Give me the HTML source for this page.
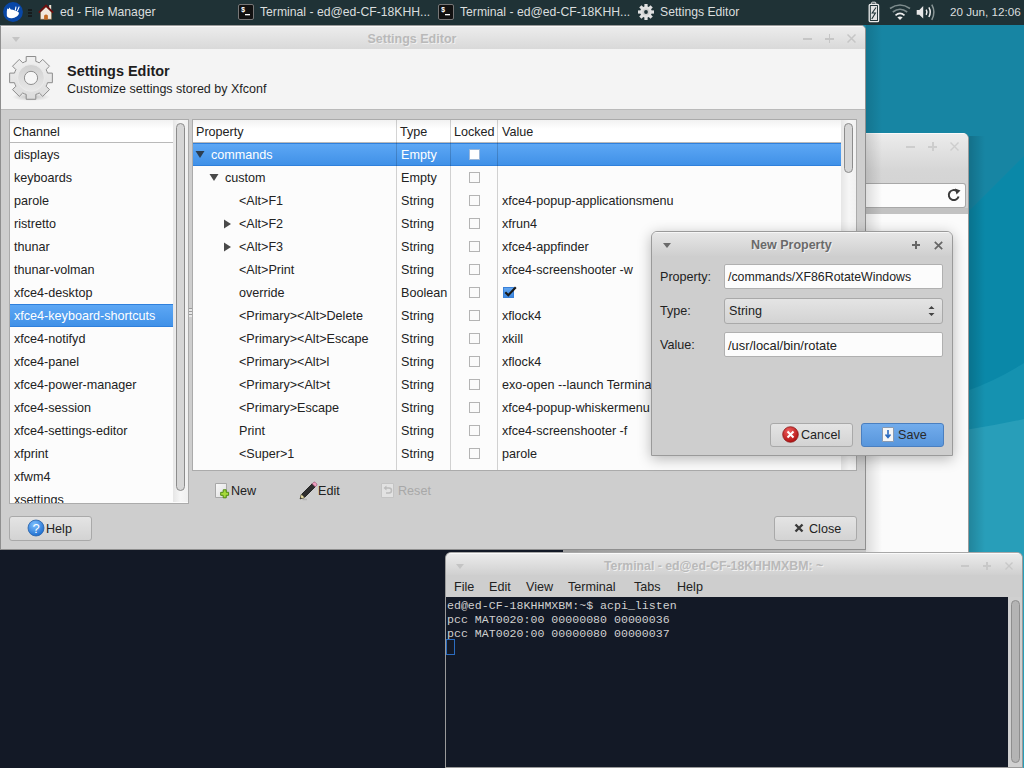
<!DOCTYPE html>
<html><head><meta charset="utf-8">
<style>
*{box-sizing:border-box;margin:0;padding:0}
html,body{width:1024px;height:768px;overflow:hidden;background:#1a86a3;font-family:"Liberation Sans",sans-serif;font-size:12.6px;color:#222}
.a{position:absolute}
.nw{white-space:nowrap}
#desk{left:0;top:0;width:1024px;height:768px;background:linear-gradient(135deg,#1986a8 0%,#1b8eac 45%,#0f80a2 55%,#0a7090 100%)}
#panel{left:0;top:0;width:1024px;height:25px;background:#1f3236;color:#dfe3e3}
.pt{top:5px;font-size:12.2px;white-space:nowrap;color:#dadede}
.ttl{font-weight:bold;color:#b9b9b9;text-shadow:1px 1px 0 #f0f0f0;font-size:13px;white-space:nowrap}
.r{position:absolute;left:0;height:23px;line-height:23px;white-space:nowrap;padding-top:1px}
.sel{background:linear-gradient(#5ea8f5,#3f90e7);box-shadow:inset 0 1px 0 #2f80dc,inset 0 -1px 0 #2f80dc;color:#fff}
.cb{position:absolute;width:11px;height:11px;border:1px solid #b4b4b4;background:#fbfbfb}
.btn{position:absolute;border:1px solid #a9a9a9;border-radius:3px;background:linear-gradient(#e4e4e4,#d3d3d3);}
.entry{position:absolute;border:1px solid #b0b0b0;border-radius:2px;background:#fcfcfc}
.mono{font-family:"Liberation Mono",monospace}
.hdr{position:absolute;top:0;height:23px;line-height:23px;background:linear-gradient(#f2f2f2,#ffffff 40%);border-bottom:1px solid #b9b9b9;white-space:nowrap}
.col{position:absolute;top:0;width:1px;background:rgba(0,0,0,0.17)}
</style></head><body>
<svg id="desk" class="a" width="1024" height="768" viewBox="0 0 1024 768">
<rect width="1024" height="768" fill="#0a88a8"/>
<path d="M0 0 H1024 V156 L700 480 L0 480 Z" fill="#1785a3"/>
<path d="M900 410 L968 390.5 Q997 380 1024 363 V768 H900 Z" fill="#1592b0"/>
<path d="M900 440 L968 429.5 Q997 425 1024 419 V768 H900 Z" fill="#289eb9"/>
</svg>

<div class="a" style="left:0;top:549px;width:563px;height:219px;background:#131926"></div>
<div class="a" style="left:563px;top:549px;width:15px;height:5px;background:#9a9a9a"></div>
<div class="a" style="left:578px;top:549px;width:288px;height:5px;background:linear-gradient(90deg,#9c9c9c,#c6c6c6)"></div>
<div class="a" style="left:866px;top:133px;width:103px;height:420px;background:#fbfbfb;border-right:1px solid #9a9a9a;border-top-right-radius:6px;overflow:hidden">
  <div class="a" style="left:0;top:0;width:102px;height:81px;background:linear-gradient(#ececec,#d6d6d6 45%,#d0d0d0);border-top:1px solid #fafafa"></div>
  <div class="a" style="left:0;top:50px;width:100px;height:25px;background:#fcfcfc;border:1px solid #a8a8a8;border-left:none;border-radius:0 3px 3px 0"></div>
  <div class="a" style="left:0;top:75px;width:102px;height:6px;background:#c2c2c2"></div>
  <svg class="a" style="left:80px;top:54px" width="16" height="16" viewBox="0 0 16 16"><path d="M12.6 9.5 A5 5 0 1 1 11 4.2" fill="none" stroke="#3a3a3a" stroke-width="2"/><path d="M9 1.5 L14.5 3.5 L10.5 7.5 Z" fill="#3a3a3a"/></svg>
  <div class="a" style="left:40px;top:13px;width:9px;height:1.5px;background:#cdcdcd"></div>
  <div class="a" style="left:62px;top:13px;width:9px;height:1.5px;background:#cdcdcd"></div><div class="a" style="left:66px;top:9px;width:1.5px;height:9px;background:#cdcdcd"></div>
  <svg class="a" style="left:84px;top:9px" width="9" height="9"><path d="M0.5 0.5 L8.5 8.5 M8.5 0.5 L0.5 8.5" stroke="#cdcdcd" stroke-width="1.4"/></svg>
</div>
<div class="a" style="left:866px;top:133px;width:16px;height:420px;background:linear-gradient(90deg,rgba(0,0,0,0.12),rgba(0,0,0,0))"></div>
<div class="a" style="left:969px;top:136px;width:16px;height:417px;background:linear-gradient(90deg,rgba(0,0,0,0.16),rgba(0,0,0,0))"></div>
<div class="a" style="left:866px;top:25px;width:16px;height:108px;background:linear-gradient(90deg,rgba(0,0,0,0.12),rgba(0,0,0,0))"></div>
<div class="a" style="left:0;top:25px;width:866px;height:525px;background:#cecece;border:1px solid #8f8f8f;border-top-color:#9a9a9a;border-top-right-radius:5px;overflow:hidden">
<div class="a" style="left:0;top:0;width:864px;height:23px;background:linear-gradient(#ececec,#d9d9d9);border-top:1px solid #fafafa"></div>
<div class="a ttl" style="left:366.5px;top:5.5px;font-size:12.5px">Settings Editor</div>
<svg class="a" style="left:10px;top:10px" width="10" height="7"><path d="M1 1 L9 1 L5 6 Z" fill="#c4c4c4"/></svg>
<div class="a" style="left:802px;top:12px;width:9px;height:1.6px;background:#c6c6c6"></div>
<div class="a" style="left:824px;top:12px;width:9px;height:1.6px;background:#c6c6c6"></div><div class="a" style="left:827.7px;top:8px;width:1.6px;height:9px;background:#c6c6c6"></div>
<svg class="a" style="left:846px;top:8px" width="9" height="9"><path d="M0.5 0.5 L8.5 8.5 M8.5 0.5 L0.5 8.5" stroke="#c6c6c6" stroke-width="1.5"/></svg>
<div class="a" style="left:0;top:23px;width:864px;height:61px;background:#f4f4f4;border-bottom:1px solid #bababa"></div>
<svg class="a" style="left:5px;top:27px" width="50" height="50" viewBox="0 0 50 50">
<defs><radialGradient id="gsh" cx="50%" cy="50%" r="50%"><stop offset="0" stop-color="#000" stop-opacity="0.22"/><stop offset="1" stop-color="#000" stop-opacity="0"/></radialGradient>
<linearGradient id="ggr" x1="0" y1="0" x2="0" y2="1"><stop offset="0" stop-color="#f0f0f0"/><stop offset="1" stop-color="#dcdcdc"/></linearGradient>
<linearGradient id="ggr2" x1="0" y1="0" x2="0" y2="1"><stop offset="0" stop-color="#d0d0d0"/><stop offset="1" stop-color="#e8e8e8"/></linearGradient></defs>
<ellipse cx="25" cy="44" rx="19" ry="4" fill="url(#gsh)"/>
<path id="gear" fill="url(#ggr)" stroke="#8c8c8c" stroke-width="1" d="M20.20 8.38 L20.20 3.53 L29.80 3.53 L29.80 8.38 A17.2 17.2 0 0 1 33.28 9.83 L36.71 6.40 L43.50 13.19 L40.07 16.62 A17.2 17.2 0 0 1 41.52 20.10 L46.37 20.10 L46.37 29.70 L41.52 29.70 A17.2 17.2 0 0 1 40.07 33.18 L43.50 36.61 L36.71 43.40 L33.28 39.97 A17.2 17.2 0 0 1 29.80 41.42 L29.80 46.27 L20.20 46.27 L20.20 41.42 A17.2 17.2 0 0 1 16.72 39.97 L13.29 43.40 L6.50 36.61 L9.93 33.18 A17.2 17.2 0 0 1 8.48 29.70 L3.63 29.70 L3.63 20.10 L8.48 20.10 A17.2 17.2 0 0 1 9.93 16.62 L6.50 13.19 L13.29 6.40 L16.72 9.83 A17.2 17.2 0 0 1 20.20 8.38 Z" stroke-linejoin="round"/>
<circle cx="25" cy="24.9" r="13.4" fill="url(#ggr2)" stroke="#ececec" stroke-width="0.8"/>
<circle cx="25" cy="24.9" r="6.6" fill="#f6f6f6" stroke="#8e8e8e" stroke-width="1"/>
</svg>
<div class="a nw" style="left:66px;top:37px;font-weight:bold;font-size:14.45px;color:#1e1e1e">Settings Editor</div>
<div class="a nw" style="left:66px;top:55.5px;font-size:12.5px;color:#1e1e1e">Customize settings stored by Xfconf</div>
<div class="a" style="left:8px;top:93px;width:180px;height:385px;background:#fcfcfc;border:1px solid #ababab;overflow:hidden">
<div class="hdr" style="left:0;width:163px;padding-left:3px;padding-top:1px">Channel</div>
<div class="r" style="top:23px;width:163px;padding-left:4px">displays</div>
<div class="r" style="top:46px;width:163px;padding-left:4px">keyboards</div>
<div class="r" style="top:69px;width:163px;padding-left:4px">parole</div>
<div class="r" style="top:92px;width:163px;padding-left:4px">ristretto</div>
<div class="r" style="top:115px;width:163px;padding-left:4px">thunar</div>
<div class="r" style="top:138px;width:163px;padding-left:4px">thunar-volman</div>
<div class="r" style="top:161px;width:163px;padding-left:4px">xfce4-desktop</div>
<div class="r sel" style="top:184px;width:163px;padding-left:4px">xfce4-keyboard-shortcuts</div>
<div class="r" style="top:207px;width:163px;padding-left:4px">xfce4-notifyd</div>
<div class="r" style="top:230px;width:163px;padding-left:4px">xfce4-panel</div>
<div class="r" style="top:253px;width:163px;padding-left:4px">xfce4-power-manager</div>
<div class="r" style="top:276px;width:163px;padding-left:4px">xfce4-session</div>
<div class="r" style="top:299px;width:163px;padding-left:4px">xfce4-settings-editor</div>
<div class="r" style="top:322px;width:163px;padding-left:4px">xfprint</div>
<div class="r" style="top:345px;width:163px;padding-left:4px">xfwm4</div>
<div class="r" style="top:368px;width:163px;padding-left:4px">xsettings</div>
<div class="a" style="left:163px;top:0;width:15px;height:382px;background:linear-gradient(90deg,#e6e6e6,#f6f6f6 50%,#f0f0f0)"></div>
<div class="a" style="left:166px;top:3px;width:9px;height:368px;border:1px solid #8c8c8c;border-radius:5px;background:#d6d6d6"></div>
</div>
<div class="a" style="left:188px;top:282px;width:4px;height:1px;background:#9c9c9c;box-shadow:0 3px 0 #9c9c9c,0 6px 0 #9c9c9c"></div>
<div class="a" style="left:188px;top:283px;width:4px;height:2px;background:#e8e8e8;box-shadow:0 3px 0 #e8e8e8,0 6px 0 #e8e8e8"></div>
<div class="a" style="left:191px;top:93px;width:665px;height:352px;background:#fcfcfc;border:1px solid #ababab;overflow:hidden">
<div class="hdr" style="left:0;width:649px"></div>
<div class="a nw" style="left:3px;top:1px;line-height:23px">Property</div>
<div class="a nw" style="left:207px;top:1px;line-height:23px">Type</div>
<div class="a nw" style="left:261px;top:1px;line-height:23px">Locked</div>
<div class="a nw" style="left:309px;top:1px;line-height:23px">Value</div>
<div class="r sel" style="top:23px;width:649px">
<svg class="a" style="left:2px;top:7px" width="10" height="9"><path d="M0.5 1 L9.5 1 L5 8 Z" fill="#2c3e50"/></svg>
<div class="a nw" style="left:18px;top:1px">commands</div>
<div class="a nw" style="left:208px;top:1px">Empty</div>
<div class="cb" style="left:276px;top:6px;background:#ffffff;border-color:#9ab7da"></div>
</div>
<div class="r" style="top:46px;width:649px">
<svg class="a" style="left:16px;top:7px" width="10" height="9"><path d="M0.5 1 L9.5 1 L5 8 Z" fill="#4a4a4a"/></svg>
<div class="a nw" style="left:32px;top:1px">custom</div>
<div class="a nw" style="left:208px;top:1px">Empty</div>
<div class="cb" style="left:276px;top:6px;background:#fbfbfb;border-color:#b4b4b4"></div>
</div>
<div class="r" style="top:69px;width:649px">
<div class="a nw" style="left:46px;top:1px">&lt;Alt&gt;F1</div>
<div class="a nw" style="left:208px;top:1px">String</div>
<div class="cb" style="left:276px;top:6px;background:#fbfbfb;border-color:#b4b4b4"></div>
<div class="a nw" style="left:309px;top:1px">xfce4-popup-applicationsmenu</div>
</div>
<div class="r" style="top:92px;width:649px">
<svg class="a" style="left:30px;top:7px" width="9" height="10"><path d="M1 0.5 L8 5 L1 9.5 Z" fill="#4a4a4a"/></svg>
<div class="a nw" style="left:46px;top:1px">&lt;Alt&gt;F2</div>
<div class="a nw" style="left:208px;top:1px">String</div>
<div class="cb" style="left:276px;top:6px;background:#fbfbfb;border-color:#b4b4b4"></div>
<div class="a nw" style="left:309px;top:1px">xfrun4</div>
</div>
<div class="r" style="top:115px;width:649px">
<svg class="a" style="left:30px;top:7px" width="9" height="10"><path d="M1 0.5 L8 5 L1 9.5 Z" fill="#4a4a4a"/></svg>
<div class="a nw" style="left:46px;top:1px">&lt;Alt&gt;F3</div>
<div class="a nw" style="left:208px;top:1px">String</div>
<div class="cb" style="left:276px;top:6px;background:#fbfbfb;border-color:#b4b4b4"></div>
<div class="a nw" style="left:309px;top:1px">xfce4-appfinder</div>
</div>
<div class="r" style="top:138px;width:649px">
<div class="a nw" style="left:46px;top:1px">&lt;Alt&gt;Print</div>
<div class="a nw" style="left:208px;top:1px">String</div>
<div class="cb" style="left:276px;top:6px;background:#fbfbfb;border-color:#b4b4b4"></div>
<div class="a nw" style="left:309px;top:1px">xfce4-screenshooter -w</div>
</div>
<div class="r" style="top:161px;width:649px">
<div class="a nw" style="left:46px;top:1px">override</div>
<div class="a nw" style="left:208px;top:1px">Boolean</div>
<div class="cb" style="left:276px;top:6px;background:#fbfbfb;border-color:#b4b4b4"></div>
<div class="a" style="left:310px;top:6px;width:11px;height:11px;background:linear-gradient(#62a6f0,#3d88e0);border:1px solid #3a80d8"></div>
<svg class="a" style="left:310px;top:5px;overflow:visible" width="14" height="14"><path d="M2.3 6.2 L5.3 9.2 L12.8 1.2" fill="none" stroke="#1a1a1a" stroke-width="2.2" stroke-linejoin="miter"/></svg>
</div>
<div class="r" style="top:184px;width:649px">
<div class="a nw" style="left:46px;top:1px">&lt;Primary&gt;&lt;Alt&gt;Delete</div>
<div class="a nw" style="left:208px;top:1px">String</div>
<div class="cb" style="left:276px;top:6px;background:#fbfbfb;border-color:#b4b4b4"></div>
<div class="a nw" style="left:309px;top:1px">xflock4</div>
</div>
<div class="r" style="top:207px;width:649px">
<div class="a nw" style="left:46px;top:1px">&lt;Primary&gt;&lt;Alt&gt;Escape</div>
<div class="a nw" style="left:208px;top:1px">String</div>
<div class="cb" style="left:276px;top:6px;background:#fbfbfb;border-color:#b4b4b4"></div>
<div class="a nw" style="left:309px;top:1px">xkill</div>
</div>
<div class="r" style="top:230px;width:649px">
<div class="a nw" style="left:46px;top:1px">&lt;Primary&gt;&lt;Alt&gt;l</div>
<div class="a nw" style="left:208px;top:1px">String</div>
<div class="cb" style="left:276px;top:6px;background:#fbfbfb;border-color:#b4b4b4"></div>
<div class="a nw" style="left:309px;top:1px">xflock4</div>
</div>
<div class="r" style="top:253px;width:649px">
<div class="a nw" style="left:46px;top:1px">&lt;Primary&gt;&lt;Alt&gt;t</div>
<div class="a nw" style="left:208px;top:1px">String</div>
<div class="cb" style="left:276px;top:6px;background:#fbfbfb;border-color:#b4b4b4"></div>
<div class="a nw" style="left:309px;top:1px">exo-open --launch TerminalEmulator</div>
</div>
<div class="r" style="top:276px;width:649px">
<div class="a nw" style="left:46px;top:1px">&lt;Primary&gt;Escape</div>
<div class="a nw" style="left:208px;top:1px">String</div>
<div class="cb" style="left:276px;top:6px;background:#fbfbfb;border-color:#b4b4b4"></div>
<div class="a nw" style="left:309px;top:1px">xfce4-popup-whiskermenu</div>
</div>
<div class="r" style="top:299px;width:649px">
<div class="a nw" style="left:46px;top:1px">Print</div>
<div class="a nw" style="left:208px;top:1px">String</div>
<div class="cb" style="left:276px;top:6px;background:#fbfbfb;border-color:#b4b4b4"></div>
<div class="a nw" style="left:309px;top:1px">xfce4-screenshooter -f</div>
</div>
<div class="r" style="top:322px;width:649px">
<div class="a nw" style="left:46px;top:1px">&lt;Super&gt;1</div>
<div class="a nw" style="left:208px;top:1px">String</div>
<div class="cb" style="left:276px;top:6px;background:#fbfbfb;border-color:#b4b4b4"></div>
<div class="a nw" style="left:309px;top:1px">parole</div>
</div>
<div class="r" style="top:345px;width:649px">
<div class="a nw" style="left:46px;top:1px">&lt;Super&gt;2</div>
<div class="a nw" style="left:208px;top:1px">String</div>
<div class="cb" style="left:276px;top:6px;background:#fbfbfb;border-color:#b4b4b4"></div>
</div>
<div class="col" style="left:203px;height:400px"></div>
<div class="col" style="left:257px;height:400px"></div>
<div class="col" style="left:304px;height:400px"></div>
<div class="a" style="left:648px;top:0;width:16px;height:350px;background:linear-gradient(90deg,#e6e6e6,#f6f6f6 50%,#f0f0f0)"></div>
<div class="a" style="left:651px;top:3px;width:9px;height:50px;border:1px solid #8c8c8c;border-radius:5px;background:#d6d6d6"></div>
</div>
<svg class="a" style="left:213px;top:456px" width="18" height="18" viewBox="0 0 18 18"><defs><linearGradient id="ndoc" x1="0" y1="0" x2="1" y2="1"><stop offset="0" stop-color="#fafafa"/><stop offset="1" stop-color="#dcdcdc"/></linearGradient></defs><path d="M1.5 1.5 H12.5 V15.5 H1.5 Z" fill="url(#ndoc)" stroke="#a8a8a8"/><path d="M9.2 7.8 H12.2 V10.3 H14.6 V13.3 H12.2 V15.8 H9.2 V13.3 H6.7 V10.3 H9.2 Z" fill="#a6d93a" stroke="#4f8a10" stroke-width="1" stroke-linejoin="round"/></svg>
<div class="a nw" style="left:230px;top:458px">New</div>
<svg class="a" style="left:297px;top:455px" width="20" height="20" viewBox="0 0 20 20"><path d="M2.2 17.8 L3.4 13.6 L14.2 2.8 L17.2 5.8 L6.4 16.6 Z" fill="#2e2e2e" stroke="#111" stroke-width="0.8" stroke-linejoin="round"/><path d="M14.2 2.8 L15.6 1.4 Q16.4 0.8 17.2 1.4 L18.6 2.8 Q19.2 3.6 18.6 4.4 L17.2 5.8 Z" fill="#f0a0c0" stroke="#9a5070" stroke-width="0.7"/><path d="M2.2 17.8 L3.4 13.6 L6.4 16.6 Z" fill="#efe6b0" stroke="#8a8050" stroke-width="0.5"/><path d="M2 18 L2.6 16 L4 17.4 Z" fill="#222"/><path d="M4.5 18.5 L9 18.5" stroke="#000" stroke-opacity="0.12" stroke-width="1.5"/></svg>
<div class="a nw" style="left:317px;top:458px">Edit</div>
<svg class="a" style="left:379px;top:456px" width="16" height="17" viewBox="0 0 16 17"><path d="M1.5 1.5 H13.5 V15.5 H1.5 Z" fill="#e2e2e2" stroke="#c4c4c4"/><path d="M5 6 H9 Q11.5 6 11.5 8.5 Q11.5 11 9 11 H6" fill="none" stroke="#bcbcbc" stroke-width="1.5"/><path d="M3.5 6 L6.5 3.5 V8.5 Z" fill="#bcbcbc"/></svg>
<div class="a nw" style="left:397px;top:458px;color:#a8a8a8">Reset</div>
<div class="btn" style="left:8px;top:490px;width:83px;height:25px"></div>
<svg class="a" style="left:26px;top:493px" width="18" height="18" viewBox="0 0 18 18"><defs><radialGradient id="hq" cx="40%" cy="30%" r="70%"><stop offset="0" stop-color="#7fc0ff"/><stop offset="1" stop-color="#1f6fd0"/></radialGradient></defs><circle cx="9" cy="9" r="8" fill="url(#hq)" stroke="#2a62a8" stroke-width="0.8"/><text x="9" y="13.5" text-anchor="middle" font-family="Liberation Sans" font-size="13" fill="#fff">?</text></svg>
<div class="a nw" style="left:45px;top:496px">Help</div>
<div class="btn" style="left:773px;top:490px;width:83px;height:25px"></div>
<svg class="a" style="left:793px;top:497px" width="10" height="10"><path d="M1.5 1.5 L8.5 8.5 M8.5 1.5 L1.5 8.5" stroke="#3a3a3a" stroke-width="2.4"/></svg>
<div class="a nw" style="left:808px;top:496px">Close</div>
</div>
<div class="a" style="left:651px;top:231px;width:302px;height:225px;border-radius:6px 6px 0 0;box-shadow:0 3px 14px rgba(0,0,0,0.28)"></div>
<div class="a" style="left:651px;top:231px;width:302px;height:225px;background:#cecece;border:1px solid #9a9a9a;border-radius:6px 6px 0 0;overflow:hidden">
<div class="a" style="left:0;top:0;width:300px;height:24px;background:linear-gradient(#e6e6e6,#cfcfcf);border-top:1px solid #f6f6f6"></div>
<svg class="a" style="left:10px;top:10px" width="10" height="7"><path d="M1 1 L9 1 L5 6 Z" fill="#6a6a6a"/></svg>
<div class="a ttl" style="left:99px;top:6px;color:#6a6a6a;text-shadow:1px 1px 0 #f0f0f0;font-size:12.5px">New Property</div>
<div class="a" style="left:260px;top:12px;width:8px;height:1.8px;background:#666"></div><div class="a" style="left:263.1px;top:9px;width:1.8px;height:8px;background:#666"></div>
<svg class="a" style="left:282px;top:9px" width="9" height="9"><path d="M0.8 0.8 L8.2 8.2 M8.2 0.8 L0.8 8.2" stroke="#666" stroke-width="1.7"/></svg>
<div class="a nw" style="left:8px;top:38px">Property:</div>
<div class="a nw" style="left:8px;top:72px">Type:</div>
<div class="a nw" style="left:8px;top:106px">Value:</div>
<div class="entry" style="left:72px;top:32px;width:219px;height:25px"></div>
<div class="a nw" style="left:76px;top:38px;font-size:12.35px">/commands/XF86RotateWindows</div>
<div class="btn" style="left:72px;top:66px;width:219px;height:26px;border-radius:3px"></div>
<div class="a nw" style="left:77px;top:72px">String</div>
<svg class="a" style="left:275px;top:72px" width="9" height="14"><path d="M1.5 5 L4.5 2 L7.5 5 Z M1.5 9 L4.5 12 L7.5 9 Z" fill="#444"/></svg>
<div class="entry" style="left:72px;top:100px;width:219px;height:25px"></div>
<div class="a nw" style="left:76px;top:106px;font-size:12.9px">/usr/local/bin/rotate</div>
<div class="btn" style="left:118px;top:191px;width:83px;height:24px"></div>
<svg class="a" style="left:130px;top:194px" width="17" height="17" viewBox="0 0 17 17"><defs><radialGradient id="cx" cx="40%" cy="30%" r="70%"><stop offset="0" stop-color="#f06060"/><stop offset="1" stop-color="#b01010"/></radialGradient></defs><circle cx="8.5" cy="8.5" r="7.8" fill="url(#cx)" stroke="#8a1a1a" stroke-width="0.8"/><path d="M5.5 5.5 L11.5 11.5 M11.5 5.5 L5.5 11.5" stroke="#fff" stroke-width="2"/></svg>
<div class="a nw" style="left:149px;top:196px">Cancel</div>
<div class="a" style="left:209px;top:191px;width:83px;height:24px;border:1px solid #4a7fc0;border-radius:3px;background:linear-gradient(#72acec,#5896dc)"></div>
<svg class="a" style="left:229px;top:194px" width="14" height="17" viewBox="0 0 14 17"><path d="M1.5 1.5 H12.5 V15.5 H1.5 Z" fill="#f6f6f6" stroke="#8a9ab0"/><path d="M7 4 V11 M4.5 8.5 L7 11.5 L9.5 8.5" stroke="#2a6ac0" stroke-width="1.6" fill="none"/></svg>
<div class="a nw" style="left:246px;top:196px;color:#2a2a2a">Save</div>
</div>
<div class="a" style="left:445px;top:552px;width:578px;height:216px;background:#cecece;border:1px solid #9a9a9a;border-top-color:#a8a8a8;border-top-left-radius:6px;border-top-right-radius:6px;overflow:hidden">
<div class="a" style="left:0;top:0;width:579px;height:22px;background:linear-gradient(#ebebeb,#d0d0d0);border-top:1px solid #fafafa"></div>
<svg class="a" style="left:9px;top:10px" width="10" height="7"><path d="M1 1 L9 1 L5 6 Z" fill="#c4c4c4"/></svg>
<div class="a ttl" style="left:158px;top:6px;font-size:12.3px">Terminal - ed@ed-CF-18KHHMXBM: ~</div>
<div class="a" style="left:515px;top:12px;width:8px;height:1.6px;background:#c8c8c8"></div>
<div class="a" style="left:537px;top:12px;width:8px;height:1.6px;background:#c8c8c8"></div><div class="a" style="left:540.2px;top:8.5px;width:1.6px;height:8px;background:#c8c8c8"></div>
<svg class="a" style="left:559px;top:8.5px" width="8" height="8"><path d="M0.5 0.5 L7.5 7.5 M7.5 0.5 L0.5 7.5" stroke="#c8c8c8" stroke-width="1.4"/></svg>
<div class="a nw" style="left:8px;top:27px">File</div>
<div class="a nw" style="left:43px;top:27px">Edit</div>
<div class="a nw" style="left:80px;top:27px">View</div>
<div class="a nw" style="left:122px;top:27px">Terminal</div>
<div class="a nw" style="left:188px;top:27px">Tabs</div>
<div class="a nw" style="left:231px;top:27px">Help</div>
<div class="a" style="left:0;top:44px;width:562px;height:175px;background:#131926"></div>
<div class="a" style="left:562px;top:44px;width:17px;height:175px;background:#d0d0d0"></div>
<div class="a" style="left:565px;top:47px;width:9px;height:163px;border:1px solid #8e8e8e;border-radius:5px;background:#b4b4b4"></div>
<div class="a nw mono" style="left:1px;top:46px;font-size:11.6px;line-height:14px;color:#d0d0d0">ed@ed-CF-18KHHMXBM:~$ acpi_listen</div>
<div class="a nw mono" style="left:1px;top:60px;font-size:11.6px;line-height:14px;color:#d0d0d0">pcc MAT0020:00 00000080 00000036</div>
<div class="a nw mono" style="left:1px;top:74px;font-size:11.6px;line-height:14px;color:#d0d0d0">pcc MAT0020:00 00000080 00000037</div>
<div class="a" style="left:0px;top:86px;width:9px;height:16px;border:1px solid #2b6cc0"></div>
</div>
<div id="panel" class="a">
<svg class="a" style="left:3px;top:2px" width="20" height="20" viewBox="0 0 20 20"><circle cx="10" cy="10" r="9.9" fill="#0847a6"/><path d="M3.8 9.5 L4.2 6.6 L5.6 7.2 L6.4 5.6 L7.8 7.4 C10.5 7.6 13.5 8.6 15.8 10.4 C16.5 12.5 14 15 10 16 C7 16.6 4.2 15.8 3.8 13.5 Z" fill="#fff"/><path d="M12.3 8.4 L13 4.6 M14.3 9.2 L16.2 4.6" stroke="#fff" stroke-width="1.1"/></svg>
<div class="a" style="left:28px;top:9px;width:4px;height:2px;background:#151a1c"></div><div class="a" style="left:28px;top:12px;width:4px;height:2px;background:#151a1c"></div><div class="a" style="left:28px;top:15px;width:4px;height:2px;background:#151a1c"></div>
<svg class="a" style="left:38px;top:4px" width="16" height="16" viewBox="0 0 16 16"><rect x="11.2" y="1" width="2" height="5" fill="#efe4d4"/><path d="M2.5 8 L8 2.8 L13.5 8 V15.3 H2.5 Z" fill="#f2e8dc" stroke="#8a6a40" stroke-width="0.6"/><path d="M0.8 8.6 L8 1.6 L15.2 8.6" fill="none" stroke="#6e1010" stroke-width="1.8"/><path d="M6.1 15.5 V11.5 Q8 9.3 9.9 11.5 V15.5 Z" fill="#c46a22"/></svg>
<div class="a pt" style="left:60px">ed - File Manager</div>
<svg class="a" style="left:238px;top:4px" width="16" height="16" viewBox="0 0 16 16"><rect x="0.5" y="0.5" width="15" height="15" rx="1.5" fill="#111" stroke="#777"/><text x="3" y="8" font-size="7" font-family="Liberation Mono" fill="#fff" font-weight="bold">$</text><rect x="7" y="10" width="5" height="1.3" fill="#fff"/></svg>
<svg class="a" style="left:438px;top:4px" width="16" height="16" viewBox="0 0 16 16"><rect x="0.5" y="0.5" width="15" height="15" rx="1.5" fill="#111" stroke="#777"/><text x="3" y="8" font-size="7" font-family="Liberation Mono" fill="#fff" font-weight="bold">$</text><rect x="7" y="10" width="5" height="1.3" fill="#fff"/></svg>
<div class="a pt" style="left:260px">Terminal - ed@ed-CF-18KHH...</div>
<div class="a pt" style="left:460px">Terminal - ed@ed-CF-18KHH...</div>
<svg class="a" style="left:637px;top:3px" width="18" height="18" viewBox="0 0 18 18"><g transform="translate(9 9)" fill="#e2e2e2"><rect x="-1.6" y="-8" width="3.2" height="4" transform="rotate(0)"/><rect x="-1.6" y="-8" width="3.2" height="4" transform="rotate(45)"/><rect x="-1.6" y="-8" width="3.2" height="4" transform="rotate(90)"/><rect x="-1.6" y="-8" width="3.2" height="4" transform="rotate(135)"/><rect x="-1.6" y="-8" width="3.2" height="4" transform="rotate(180)"/><rect x="-1.6" y="-8" width="3.2" height="4" transform="rotate(225)"/><rect x="-1.6" y="-8" width="3.2" height="4" transform="rotate(270)"/><rect x="-1.6" y="-8" width="3.2" height="4" transform="rotate(315)"/><circle r="5.8"/><circle r="3.6" fill="#cfcfcf"/></g><circle cx="9" cy="9" r="1.9" fill="#1f3236"/></svg>
<div class="a pt" style="left:660px">Settings Editor</div>
<svg class="a" style="left:868px;top:1px" width="12" height="22" viewBox="0 0 12 22"><rect x="3.6" y="1.2" width="4.2" height="2.2" rx="0.8" fill="none" stroke="#e8e8e8" stroke-width="1"/><rect x="1.2" y="3.4" width="9.4" height="17.2" rx="1.2" fill="none" stroke="#ececec" stroke-width="1.3"/><rect x="2.8" y="5" width="6.2" height="14" fill="#e2e2e2"/><path d="M8 6.5 L4.2 12 L7.4 12 L3.8 18" fill="none" stroke="#1f3236" stroke-width="1.1"/></svg>
<svg class="a" style="left:889px;top:3px" width="22" height="18" viewBox="0 0 22 18"><path d="M1 5.5 Q11 -1.5 21 5.5" fill="none" stroke="#7d8b8c" stroke-width="1.6"/><path d="M3.8 9 Q11 3.5 18.2 9" fill="none" stroke="#7d8b8c" stroke-width="1.6"/><path d="M6.5 12.3 Q11 8.6 15.5 12.3" fill="none" stroke="#eeeeee" stroke-width="1.7"/><path d="M8.3 14.2 Q11 12.6 13.7 14.2 L11 17 Z" fill="#eeeeee"/></svg>
<svg class="a" style="left:916px;top:3px" width="21" height="18" viewBox="0 0 21 18"><path d="M0.7 7 H3.3 L7.2 3 V15.5 L3.3 11.8 H0.7 Z" fill="#e8e8e8"/><path d="M10.2 6.6 Q11.8 9.2 10.2 11.8" fill="none" stroke="#eeeeee" stroke-width="1.5"/><path d="M12.9 4.4 Q15.6 9.2 12.9 14" fill="none" stroke="#eeeeee" stroke-width="1.5"/><path d="M15.8 1.6 Q20 9.2 15.8 16.8" fill="none" stroke="#8a9696" stroke-width="1.5"/></svg>
<div class="a pt" style="left:950px;font-size:11.7px">20 Jun, 12:06</div>
</div>
</body></html>
